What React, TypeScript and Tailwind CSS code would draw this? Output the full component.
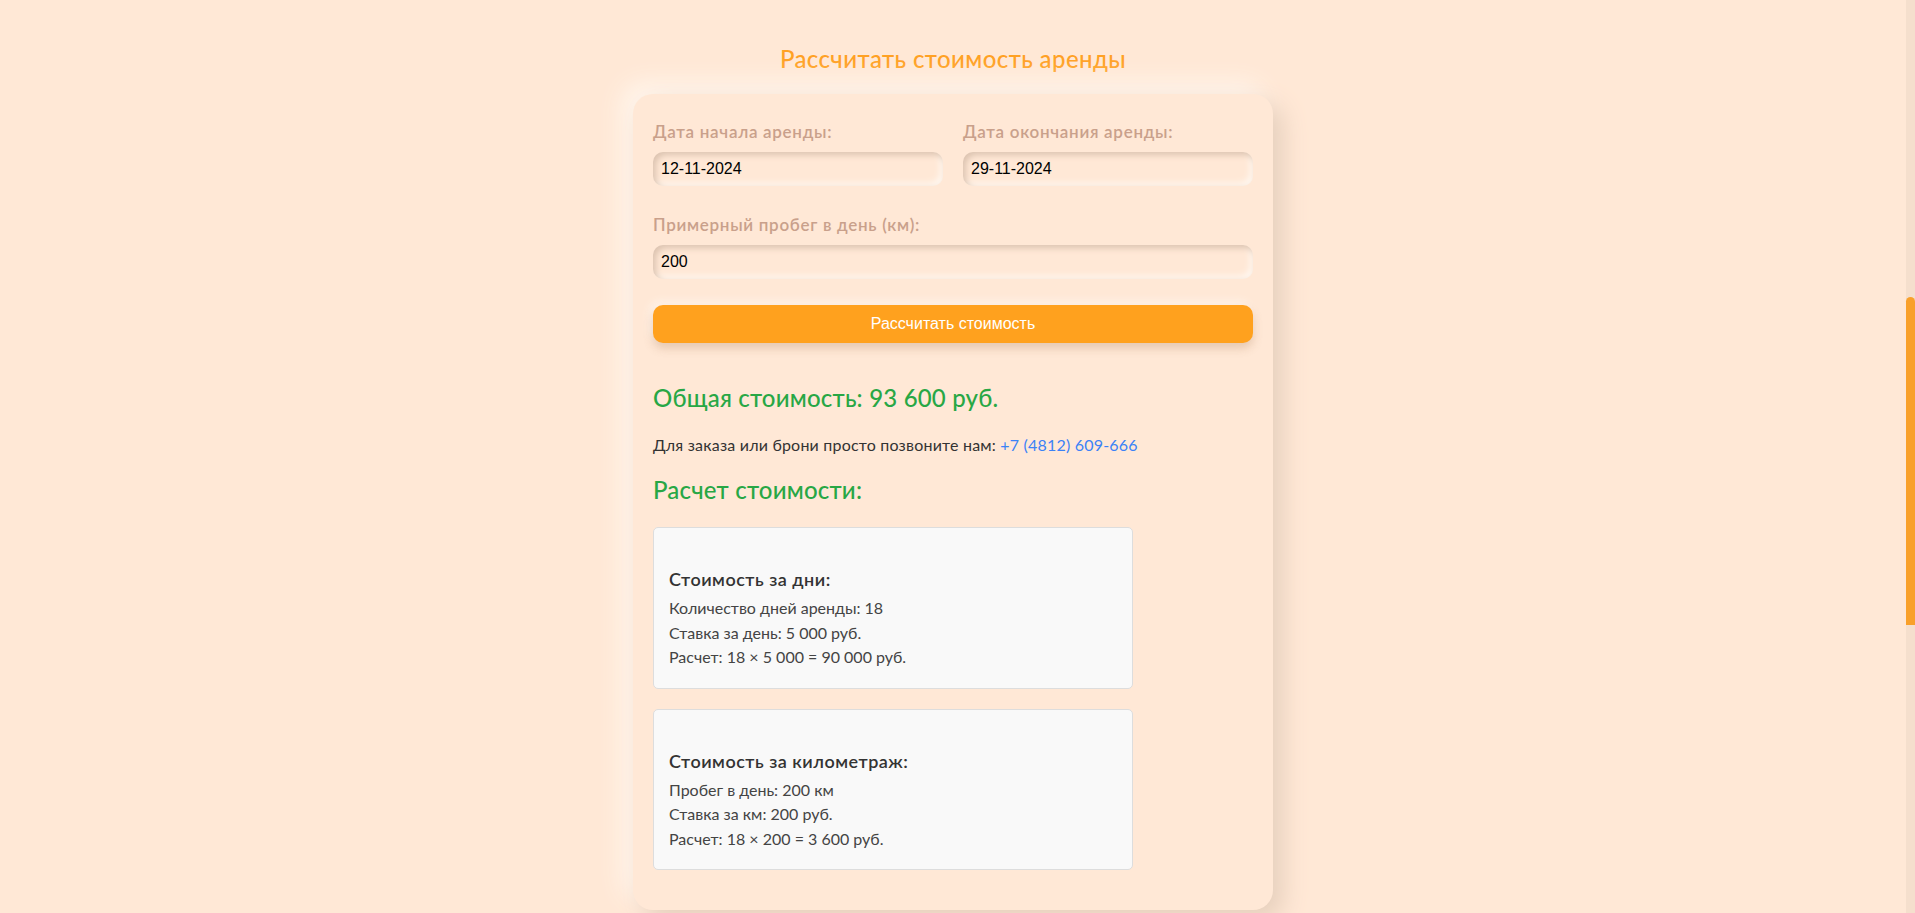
import React from "react";

const raleway = "font-['Lato','Noto_Sans',sans-serif]";
const arial = "font-['Liberation_Sans',Arial,sans-serif]";

function Field({ label, value }: { label: string; value: string }) {
  return (
    <div className="flex flex-col">
      <label className={`${raleway} mb-[11px] text-[17px] font-semibold leading-[19px] tracking-[0.7px] text-[#c9a08b]`}>
        {label}
      </label>
      <input
        type="text"
        defaultValue={value}
        className={`${arial} h-[34px] w-full rounded-[10px] bg-transparent px-2 text-[16px] text-black outline-none shadow-[inset_3px_3px_6px_#dcc3b0,inset_-3px_-3px_6px_#fff8f1]`}
      />
    </div>
  );
}

function CostBox({ title, lines }: { title: string; lines: string[] }) {
  return (
    <div className="w-[80%] rounded-[5px] border border-[#dddddd] bg-[#f9f9f9] px-[15px] pt-[39px] pb-[18px]">
      <h4 className="mb-[5px] text-[18px] font-semibold leading-[24px] tracking-[0.5px] text-[#333333]">{title}</h4>
      {lines.map((l) => (
        <p key={l} className="text-[16px] leading-[24.5px] text-[#444444]">
          {l}
        </p>
      ))}
    </div>
  );
}

export default function App() {
  return (
    <div className={`${raleway} flex h-screen w-full overflow-hidden bg-[#ffe8d6]`}>
      <main className="flex flex-1 flex-col items-center pt-[44px]">
        <h1 className="mb-[21px] text-[24px] font-medium leading-[29px] tracking-[0.4px] text-[#ffa124]">
          Рассчитать стоимость аренды
        </h1>

        <div className="flex w-[640px] flex-col rounded-[20px] bg-[#ffe8d6] px-5 pt-[28px] pb-[40px] shadow-[10px_10px_24px_#e6cfbc,-10px_-10px_24px_#fff7ef]">
          <div className="grid grid-cols-2 gap-5">
            <Field label="Дата начала аренды:" value="12-11-2024" />
            <Field label="Дата окончания аренды:" value="29-11-2024" />
          </div>

          <div className="mt-[29px]">
            <Field label="Примерный пробег в день (км):" value="200" />
          </div>

          <button
            className={`${arial} mt-[26px] h-[38px] w-full rounded-[10px] bg-[#ffa11e] text-[16px] text-white shadow-[0_5px_10px_rgba(170,120,80,0.3),-3px_-3px_8px_#fff6ee]`}
          >
            Рассчитать стоимость
          </button>

          <h2 className="mt-[40px] text-[24px] font-medium leading-[30px] tracking-[0.2px] text-[#28a745]">
            Общая стоимость: 93 600 руб.
          </h2>

          <p className="mt-[20px] text-[16px] leading-[24px] tracking-[0.2px] text-[#333333]">
            Для заказа или брони просто позвоните нам:{" "}
            <a className="text-[#3b82f6]">+7 (4812) 609-666</a>
          </p>

          <h3 className="mt-[18px] text-[24px] font-medium leading-[30px] tracking-[0.2px] text-[#28a745]">
            Расчет стоимости:
          </h3>

          <div className="mt-[22px] flex flex-col gap-5">
            <CostBox
              title="Стоимость за дни:"
              lines={[
                "Количество дней аренды: 18",
                "Ставка за день: 5 000 руб.",
                "Расчет: 18 × 5 000 = 90 000 руб.",
              ]}
            />
            <CostBox
              title="Стоимость за километраж:"
              lines={["Пробег в день: 200 км", "Ставка за км: 200 руб.", "Расчет: 18 × 200 = 3 600 руб."]}
            />
          </div>
        </div>
      </main>

      <div className="w-[9px] shrink-0 bg-[#f5dfcd]">
        <div className="mt-[297px] h-[328px] rounded-t-[5px] bg-[#f9a02a]" />
      </div>
    </div>
  );
}
